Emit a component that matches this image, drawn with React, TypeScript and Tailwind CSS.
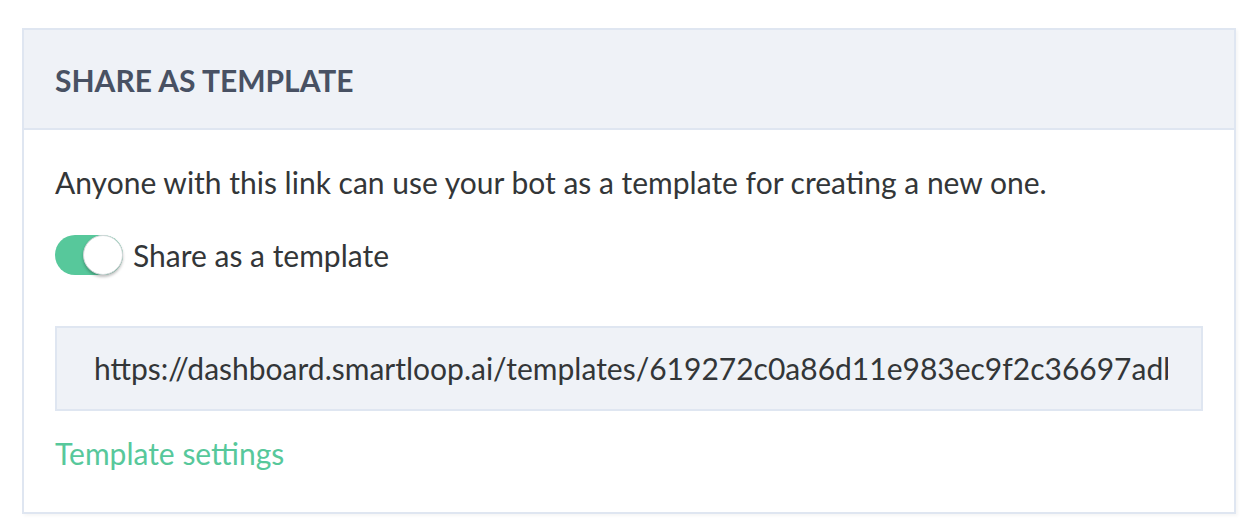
import { useState } from "react";

export default function App() {
  const [shared, setShared] = useState<boolean>(true);

  return (
    <div className="min-h-screen bg-white pl-[22px] pt-[28px] font-['Lato','Noto_Sans',sans-serif]">
      <div className="w-[1214px] border-2 border-[#dfe6f1] bg-white shadow-[2px_2px_3px_rgba(0,0,0,0.04)]">
        <div className="flex h-[100px] items-center border-b-2 border-[#dfe6f1] bg-[#eff2f7] px-[31px] pt-[2px]">
          <h2 className="text-[30px] font-bold text-[#485163]">SHARE AS TEMPLATE</h2>
        </div>

        <div className="px-[31px] pb-[41px] pt-[34px]">
          <p className="text-[30px] leading-[36px] text-[#333638]">
            Anyone with this link can use your bot as a template for creating a new one.
          </p>

          <label className="mt-[34px] flex h-[42px] cursor-pointer items-center gap-[10px]">
            <button
              type="button"
              onClick={() => setShared(!shared)}
              className={
                shared
                  ? "relative h-[40px] w-[68px] rounded-full bg-[#57c89b]"
                  : "relative h-[40px] w-[68px] rounded-full bg-[#d9dde3]"
              }
            >
              <span
                className={
                  shared
                    ? "absolute right-0 top-0 h-[40px] w-[40px] rounded-full border border-[#d4d7da] bg-white shadow-[0_2px_3px_rgba(0,0,0,0.25)]"
                    : "absolute left-0 top-0 h-[40px] w-[40px] rounded-full border border-[#d4d7da] bg-white shadow-[0_2px_3px_rgba(0,0,0,0.25)]"
                }
              />
            </button>
            <span className="text-[30px] leading-[36px] text-[#333638]">Share as a template</span>
          </label>

          {/* the link is wider than the box; it is cut at the right, as in the original */}
          <div className="mt-[50px] flex h-[85px] items-center border-2 border-[#dfe6f1] bg-[#eff2f7] pl-[37px] pr-[33px]">
            <span className="overflow-hidden whitespace-nowrap text-[30px] text-[#333638]">
              https://dashboard.smartloop.ai/templates/619272c0a86d11e983ec9f2c36697adb
            </span>
          </div>

          <a href="#" className="mt-[24px] block text-[30px] leading-[36px] text-[#57c89b]">
            Template settings
          </a>
        </div>
      </div>
    </div>
  );
}
